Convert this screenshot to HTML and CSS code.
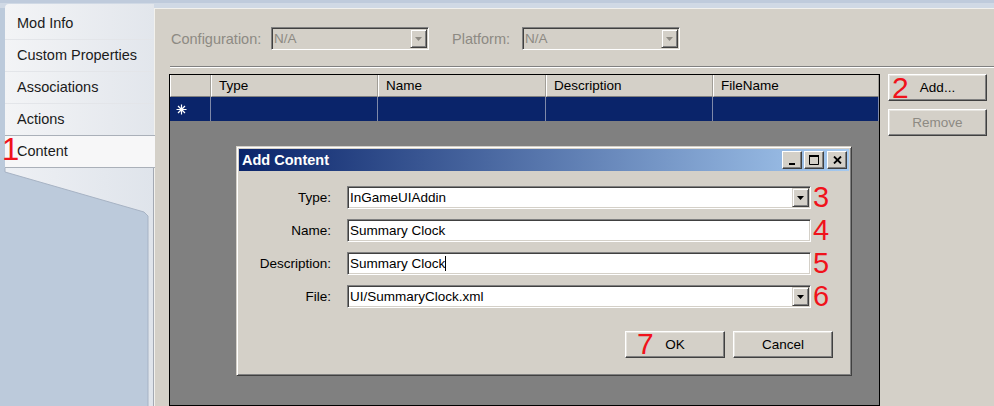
FILE: index.html
```html
<!DOCTYPE html>
<html lang="en">
<head>
    <meta charset="UTF-8">
    <title>Mod Buddy - Content</title>
    <link rel="stylesheet" href="styles.css">
</head>
<body>
    <aside class="sidebar">
        <ul class="tabs">
            <li class="tab">Mod Info</li>
            <li class="tab">Custom Properties</li>
            <li class="tab">Associations</li>
            <li class="tab">Actions</li>
            <li class="tab tab-active"><span class="anno anno-1">1</span>Content</li>
        </ul>
        <svg class="tab-tail" viewBox="0 0 154 238" preserveAspectRatio="none">
            <defs>
                <linearGradient id="tailFill" x1="0" x2="1" y1="0" y2="0">
                    <stop offset="0" stop-color="#eef0f4"/>
                    <stop offset="1" stop-color="#dfe4eb"/>
                </linearGradient>
            </defs>
            <polygon points="5,0 154,0 154,238 148,238 148,48 144,44 5,4" fill="url(#tailFill)"/>
            <polyline points="5,0 5,4 144,44 148,48 148,238" fill="none" stroke="#a7b3c4" stroke-width="1"/>
            <line x1="153.5" y1="0" x2="153.5" y2="238" stroke="#a3a9b3" stroke-width="1"/>
        </svg>
    </aside>

    <main class="editor">
        <div class="config-row">
            <span class="config-label label-config">Configuration:</span>
            <div class="combo combo-disabled combo-config">
                <span>N/A</span>
                <span class="drop-btn"><svg width="7" height="4" viewBox="0 0 7 4"><path d="M0 0h7L3.5 4z" fill="#8d8a83"/></svg></span>
            </div>
            <span class="config-label label-platform">Platform:</span>
            <div class="combo combo-disabled">
                <span>N/A</span>
                <span class="drop-btn"><svg width="7" height="4" viewBox="0 0 7 4"><path d="M0 0h7L3.5 4z" fill="#8d8a83"/></svg></span>
            </div>
        </div>

        <div class="separator"></div>

        <div class="content-row">
            <div class="grid">
                <div class="grid-head">
                    <div class="cell row-head"></div>
                    <div class="cell">Type</div>
                    <div class="cell">Name</div>
                    <div class="cell">Description</div>
                    <div class="cell">FileName</div>
                </div>
                <div class="grid-row selected">
                    <div class="cell row-head">
                        <svg width="11" height="11" viewBox="0 0 11 11"><path d="M5.5 0.5v10M0.5 5.5h10M2 2l7 7M9 2l-7 7" stroke="#fff" stroke-width="1.2"/></svg>
                    </div>
                    <div class="cell"></div>
                    <div class="cell"></div>
                    <div class="cell"></div>
                    <div class="cell"></div>
                </div>
            </div>

            <div class="side-buttons">
                <div class="anno-wrap">
                    <button class="btn">Add...</button>
                    <span class="anno anno-2">2</span>
                </div>
                <button class="btn" disabled>Remove</button>
            </div>
        </div>
    </main>

    <div class="dialog">
        <div class="title-bar">
            <span class="title">Add Content</span>
            <div class="caption-buttons">
                <span class="cap-btn"><svg width="8" height="9" viewBox="0 0 8 9"><rect x="1" y="7" width="6" height="2" fill="#000"/></svg></span>
                <span class="cap-btn"><svg width="10" height="10" viewBox="0 0 10 10"><path d="M0.5 1h9M0.5 0.5v9h9v-9" fill="none" stroke="#000" stroke-width="1"/><rect x="0" y="0" width="10" height="2" fill="#000"/></svg></span>
                <span class="cap-btn cap-close"><svg width="9" height="8" viewBox="0 0 9 8"><path d="M1 0.5l7 7M8 0.5l-7 7" stroke="#000" stroke-width="1.8"/></svg></span>
            </div>
        </div>

        <div class="form">
            <div class="form-row">
                <label class="form-label">Type:</label>
                <div class="input combo-input">
                    <span>InGameUIAddin</span>
                    <span class="drop-btn"><svg width="7" height="4" viewBox="0 0 7 4"><path d="M0 0h7L3.5 4z" fill="#000"/></svg></span>
                </div>
                <span class="step">3</span>
            </div>
            <div class="form-row">
                <label class="form-label">Name:</label>
                <div class="input"><span>Summary Clock</span></div>
                <span class="step">4</span>
            </div>
            <div class="form-row">
                <label class="form-label">Description:</label>
                <div class="input"><span>Summary Clock</span><span class="caret"></span></div>
                <span class="step">5</span>
            </div>
            <div class="form-row">
                <label class="form-label">File:</label>
                <div class="input combo-input">
                    <span>UI/SummaryClock.xml</span>
                    <span class="drop-btn"><svg width="7" height="4" viewBox="0 0 7 4"><path d="M0 0h7L3.5 4z" fill="#000"/></svg></span>
                </div>
                <span class="step">6</span>
            </div>
        </div>

        <div class="dialog-buttons">
            <div class="anno-wrap">
                <button class="btn btn-dialog">OK</button>
                <span class="anno anno-7">7</span>
            </div>
            <button class="btn btn-dialog">Cancel</button>
        </div>
    </div>
</body>
</html>
```

FILE: styles.css
```css
:root {
    --face: #d4d0c8;
    --shadow: #808080;
    --dark: #404040;
    --light: #ffffff;
    --disabled-text: #8d8a83;
    --select: #0a246a;
    --anno: #f0121b;
}

* {
    box-sizing: border-box;
}

body {
    margin: 0;
    height: 406px;
    display: flex;
    overflow: hidden;
    font-family: "Liberation Sans", Arial, sans-serif;
    font-size: 13px;
    color: #000;
    background: linear-gradient(#bfcbdc 0, #bfcbdc 3px, #d0d9e5 3px, #d0d9e5 8px, #bccadb 8px);
}

/* left tab strip */

.sidebar {
    width: 154px;
    flex-shrink: 0;
    display: flex;
    flex-direction: column;
    padding-top: 4px;
}

.tabs {
    list-style: none;
    margin: 0 0 0 5px;
    padding: 4px 0 0;
    background: linear-gradient(to right, #f3f4f6, #e2e6ec);
    border-radius: 4px 0 0 0;
}

.tab {
    position: relative;
    height: 32px;
    line-height: 31px;
    padding-left: 12px;
    border-bottom: 1px solid #e3e5e9;
    color: #1b1b1b;
    font-size: 14.5px;
}

.tab-active {
    background: #f7f7f8;
    border-top: 1px solid #aab0b9;
    border-bottom: 1px solid #aab0b9;
    margin-top: -1px;
    margin-right: -1px;
    height: 33px;
}

.tab-tail {
    display: block;
    width: 154px;
    flex: 1;
}

/* red step numbers */

.anno {
    position: absolute;
    color: var(--anno);
    font-family: "Liberation Sans", Arial, sans-serif;
    font-size: 30px;
    line-height: 30px;
    pointer-events: none;
}

.anno-wrap {
    position: relative;
}

.anno-1 {
    left: -3px;
    top: -1px;
    font-size: 31px;
}

.anno-2 {
    left: 4px;
    top: -1px;
}

.anno-7 {
    left: 12px;
    top: -2px;
}

/* main editor */

.editor {
    flex: 1;
    margin-top: 8px;
    background: var(--face);
    border-top: 1px solid #f2f1ed;
    border-left: 1px solid #f2f1ed;
    display: flex;
    flex-direction: column;
    min-width: 0;
}

.config-row {
    display: flex;
    align-items: center;
    padding: 18px 0 0 16px;
}

.config-label {
    color: var(--disabled-text);
    font-size: 14.5px;
}

.label-config {
    width: 100px;
}

.label-platform {
    width: 70px;
}

.combo {
    width: 158px;
    height: 23px;
    display: flex;
    align-items: center;
    justify-content: space-between;
    padding: 0 0 0 2px;
    font-size: 13.5px;
    border: 1px solid;
    border-color: var(--shadow) var(--light) var(--light) var(--shadow);
    box-shadow: inset 1px 1px var(--dark), inset -1px -1px var(--face);
}

.combo-disabled {
    background: var(--face);
    color: var(--disabled-text);
}

.combo-config {
    margin-right: 23px;
}

.drop-btn {
    width: 17px;
    height: 19px;
    margin-right: 1px;
    display: flex;
    align-items: center;
    justify-content: center;
    background: var(--face);
    border: 1px solid;
    border-color: var(--face) var(--dark) var(--dark) var(--face);
    box-shadow: inset 1px 1px var(--light), inset -1px -1px var(--shadow);
}

.separator {
    margin: 16px 0 0 15px;
    border-top: 1px solid var(--shadow);
    border-bottom: 1px solid var(--light);
}

.content-row {
    flex: 1;
    display: flex;
    gap: 8px;
    margin-top: 6px;
    padding-left: 14px;
    min-height: 0;
}

/* data grid */

.grid {
    width: 711px;
    border: 1px solid #000;
    background: var(--shadow);
}

.grid-head,
.grid-row {
    display: grid;
    grid-template-columns: 41px 167px 168px 167px 166px;
}

.grid-head .cell {
    height: 22px;
    line-height: 21px;
    padding-left: 7px;
    font-size: 13.5px;
    background: var(--face);
    border-left: 1px solid var(--light);
    border-right: 1px solid #a19e97;
    border-bottom: 1px solid var(--shadow);
}

.grid-row .cell {
    height: 24px;
    background: var(--select);
    border-right: 1px solid #7f89a9;
}

.grid-row .row-head {
    display: flex;
    align-items: center;
    padding-left: 6px;
}

/* buttons */

.side-buttons {
    width: 99px;
    display: flex;
    flex-direction: column;
    gap: 8px;
}

.btn {
    width: 100%;
    height: 27px;
    padding: 0;
    font-family: "Liberation Sans", Arial, sans-serif;
    font-size: 13.5px;
    color: #000;
    background: var(--face);
    border: 1px solid;
    border-color: var(--light) var(--dark) var(--dark) var(--light);
    box-shadow: inset -1px -1px var(--shadow), inset 1px 1px #e6e4df;
}

.btn:disabled {
    color: var(--disabled-text);
}

/* dialog */

.dialog {
    position: absolute;
    left: 236px;
    top: 146px;
    width: 616px;
    height: 230px;
    padding: 2px;
    background: var(--face);
    border: 1px solid;
    border-color: var(--face) var(--dark) var(--dark) var(--face);
    box-shadow: inset 1px 1px var(--light), inset -1px -1px var(--shadow);
}

.title-bar {
    height: 22px;
    display: flex;
    align-items: center;
    padding: 0 2px 0 3px;
    background: linear-gradient(to right, #0a246a, #a6caf0);
    color: #fff;
}

.title {
    font-weight: bold;
    font-size: 14.5px;
}

.caption-buttons {
    margin-left: auto;
    display: flex;
    gap: 2px;
}

.cap-btn {
    width: 20px;
    height: 18px;
    display: flex;
    align-items: center;
    justify-content: center;
    background: var(--face);
    border: 1px solid;
    border-color: var(--light) var(--dark) var(--dark) var(--light);
    box-shadow: inset -1px -1px var(--shadow);
}

.cap-close {
    margin-left: 1px;
}

.form {
    display: flex;
    flex-direction: column;
    gap: 10px;
    padding-top: 15px;
}

.form-row {
    display: flex;
    align-items: center;
    height: 23px;
}

.form-label {
    width: 92px;
    margin-right: 16px;
    text-align: right;
    font-size: 13.5px;
}

.input {
    width: 464px;
    height: 23px;
    display: flex;
    align-items: center;
    padding-left: 2px;
    background: #fff;
    border: 1px solid;
    border-color: var(--shadow) var(--light) var(--light) var(--shadow);
    box-shadow: inset 1px 1px var(--dark), inset -1px -1px var(--face);
    font-size: 13.5px;
}

.combo-input {
    justify-content: space-between;
}

.caret {
    width: 1px;
    height: 15px;
    background: #000;
}

.step {
    margin-left: 2px;
    color: var(--anno);
    font-size: 29px;
    line-height: 23px;
}

.dialog-buttons {
    display: flex;
    justify-content: flex-end;
    gap: 8px;
    margin-top: 23px;
    padding-right: 16px;
}

.dialog-buttons .anno-wrap,
.btn-dialog {
    width: 100px;
}
```
